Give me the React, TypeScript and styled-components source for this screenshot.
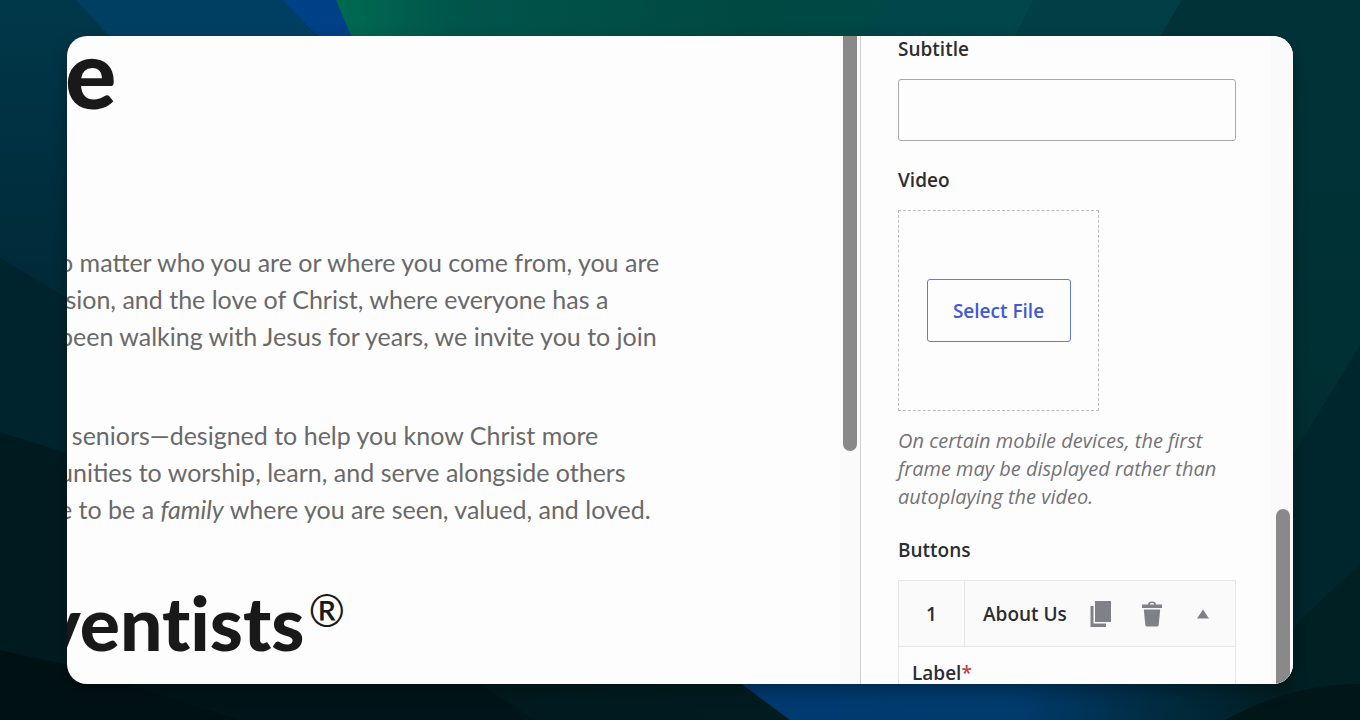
import React from "react";
import styled, { createGlobalStyle } from "styled-components";

const GlobalStyle = createGlobalStyle`
  *, *::before, *::after { box-sizing: border-box; }
  body { margin: 0; background: #00262e; }
`;

const Page = styled.div`
  position: relative;
  isolation: isolate;
  height: 100vh;
  padding: 36px 67px;
  overflow: hidden;
`;

const Backdrop = styled.svg`
  position: absolute;
  inset: 0;
  z-index: -1;
  width: 100%;
  height: 100%;
`;

const Card = styled.main`
  display: flex;
  height: 100%;
  overflow: hidden;
  border-radius: 20px;
  background: #fdfdfd;
  box-shadow: 0 6px 16px rgba(0, 0, 0, 0.3);
`;

const Preview = styled.section`
  display: flex;
  flex: 1;
  min-width: 0;
  border-right: 1px solid #cfcfd0;
`;

const Article = styled.article`
  flex: 1;
  min-width: 0;
  overflow: hidden;
  font-family: Lato, sans-serif;
  white-space: nowrap;
`;

const Hero = styled.h1`
  margin: 0 0 0 -2px;
  font-size: 96px;
  line-height: 72px;
  font-weight: 900;
  color: #191919;
`;

const Body = styled.div`
  display: flex;
  flex-direction: column;
  gap: 62px;
  margin: 136px 0 0 -8px;
`;

const Paragraph = styled.p`
  margin: 0;
  font-size: 25px;
  line-height: 37px;
  color: #696969;
`;

const Line = styled.span`
  display: block;
  white-space: pre;
`;

const Heading = styled.h2`
  display: flex;
  margin: 50px 0 0 -26px;
  font-size: 75px;
  line-height: 88px;
  font-weight: 900;
  font-variant-ligatures: none;
  color: #191919;
`;

const Registered = styled.span`
  padding-left: 4px;
  font-size: 44px;
  line-height: 64px;
  font-weight: 400;
`;

const Track = styled.div<{ $end?: boolean }>`
  display: flex;
  flex-direction: column;
  justify-content: ${(p) => (p.$end ? "flex-end" : "flex-start")};
  width: ${(p) => (p.$end ? 22 : 20)}px;
  padding: 0 3px 0 ${(p) => (p.$end ? 5 : 3)}px;
  background: #fafafa;
`;

const Thumb = styled.div<{ $end?: boolean }>`
  height: ${(p) => (p.$end ? 27 : 64)}%;
  border-radius: ${(p) => (p.$end ? "7px 7px 0 0" : "0 0 7px 7px")};
  background: #898989;
`;

const Panel = styled.aside`
  display: flex;
  width: 432px;
  font-family: "Open Sans", "Noto Sans", sans-serif;
  color: #2b2d31;
`;

const Form = styled.form`
  flex: 1;
  min-width: 0;
  overflow: hidden;
  padding: 0 35px 0 37px;
`;

const Field = styled.div`
  display: flex;
  flex-direction: column;
  align-items: flex-start;
  margin-bottom: 26px;
`;

const FieldLabel = styled.label`
  margin-bottom: 17px;
  font-size: 19px;
  line-height: 26px;
  font-weight: 600;
`;

const TextInput = styled.input`
  width: 100%;
  height: 62px;
  padding: 0 14px;
  border: 1px solid #a9a9ab;
  border-radius: 3px;
  background: #fdfdfd;
  font: inherit;
`;

const DropZone = styled.div`
  display: flex;
  align-items: center;
  justify-content: center;
  width: 201px;
  height: 201px;
  border: 1px dashed #bdbdbd;
`;

const FileButton = styled.button`
  width: 144px;
  height: 63px;
  padding: 0;
  border: 1px solid #5f7bd2;
  border-radius: 3px;
  background: #fdfdfd;
  font: 600 19px/26px "Open Sans", "Noto Sans", sans-serif;
  color: #4259d0;
`;

const Help = styled.p`
  margin: 16px 0 0;
  font-size: 20px;
  line-height: 28px;
  font-style: italic;
  color: #747476;
`;

const Repeater = styled.div`
  width: 100%;
  border: 1px solid #e6e7e8;
`;

const RepeaterHead = styled.div`
  display: flex;
  align-items: center;
  height: 66px;
  border-bottom: 1px solid #e6e7e8;
  background: #fafafa;
  font-size: 19px;
  line-height: 26px;
  font-weight: 600;
`;

const Index = styled.span`
  display: flex;
  align-items: center;
  justify-content: center;
  align-self: stretch;
  width: 66px;
  border-right: 1px solid #e6e7e8;
`;

const ItemTitle = styled.span`
  flex: 1;
  padding-left: 18px;
  white-space: nowrap;
`;

const Tools = styled.div`
  display: flex;
  gap: 21px;
  padding-right: 17px;
`;

const ToolButton = styled.button`
  display: flex;
  align-items: center;
  justify-content: center;
  width: 30px;
  height: 30px;
  padding: 0;
  border: 0;
  background: none;
  color: #808186;
`;

const RepeaterBody = styled.div`
  padding: 13px;
`;

const Required = styled.span`
  color: #d13c42;
`;

function Background() {
  return (
    <Backdrop viewBox="0 0 1360 720" preserveAspectRatio="none" aria-hidden="true">
      <defs>
        <linearGradient id="base" x1="0" y1="0" x2="0" y2="1">
          <stop offset="0" stopColor="#00384a" />
          <stop offset="0.36" stopColor="#002b3a" />
          <stop offset="1" stopColor="#00161b" />
        </linearGradient>
        <linearGradient id="green" x1="0" y1="0" x2="1" y2="0">
          <stop offset="0" stopColor="#006b51" />
          <stop offset="0.16" stopColor="#00564c" />
          <stop offset="0.6" stopColor="#004842" />
          <stop offset="1" stopColor="#00494a" />
        </linearGradient>
        <linearGradient id="right" x1="0" y1="0" x2="0" y2="1">
          <stop offset="0" stopColor="#003339" />
          <stop offset="0.5" stopColor="#003033" />
          <stop offset="0.75" stopColor="#00282d" />
          <stop offset="1" stopColor="#001c1d" />
        </linearGradient>
        <linearGradient id="blue" x1="0" y1="0" x2="1" y2="0">
          <stop offset="0" stopColor="#003a72" />
          <stop offset="0.5" stopColor="#003b6c" />
          <stop offset="0.8" stopColor="#00293a" />
          <stop offset="1" stopColor="#001d20" />
        </linearGradient>
        <linearGradient id="floor" x1="0" y1="0" x2="1" y2="0">
          <stop offset="0" stopColor="#00171b" />
          <stop offset="1" stopColor="#002025" />
        </linearGradient>
      </defs>
      <rect width="1360" height="720" fill="url(#base)" />
      <path d="M76 0H282L316 36V80H150Z" fill="#003f62" />
      <path d="M282 0H336L352 36V80H360Z" fill="#004086" />
      <path d="M336 0H1034L1015 36L990 80H370Z" fill="url(#green)" />
      <path d="M886 0H1034L1016 36H858Z" fill="#00464a" />
      <path d="M1034 0H1360V720H1180V36H1016Z" fill="url(#right)" />
      <path d="M1034 0H1182L1160 36H1016Z" fill="#003f44" />
      <path d="M1360 345L1293 455V720H1360Z" fill="#00262d" />
      <path d="M1360 565Q1320 600 1293 628V720H1360Z" fill="#002024" />
      <path d="M0 258L67 298V720H0Z" fill="#00242d" />
      <path d="M0 432L67 453V720H0Z" fill="#001b20" />
      <path d="M0 684H1360V720H0Z" fill="url(#floor)" />
      <path d="M0 650L67 665L240 720H0Z" fill="#001114" />
      <path d="M130 684H480L535 720H240Z" fill="#001519" />
      <path d="M742 684H1293V720H790Z" fill="url(#blue)" />
      <path d="M1225 720Q1290 684 1360 684V720Z" fill="#001619" />
    </Backdrop>
  );
}

function CopyIcon() {
  return (
    <svg width="22" height="26" viewBox="0 0 22 26" fill="currentColor" aria-hidden="true">
      <path d="M5 0H21V21H5Z" />
      <path d="M0.500 5H3.500V22.500H16V26H0.500Z" />
    </svg>
  );
}

function TrashIcon() {
  return (
    <svg width="20" height="26" viewBox="0 0 20 26" fill="currentColor" aria-hidden="true">
      <path d="M0 3.500H6C6 1.500 7.500 0.500 10 0.500S14 1.500 14 3.500H20V7H0ZM7.700 3.500H12.300C12 2.200 11.300 2 10 2S8 2.200 7.700 3.500Z" />
      <path d="M1.800 8.500H18.200L16.700 24Q16.500 25.500 15 25.500H5Q3.500 25.500 3.300 24Z" />
    </svg>
  );
}

function CaretIcon() {
  return (
    <svg width="14" height="10" viewBox="0 0 14 10" fill="currentColor" aria-hidden="true">
      <path d="M7 0.500L13 9.500H1Z" />
    </svg>
  );
}

const welcome = [
  "o matter who you are or where you come from, you are",
  "\u00a0sion, and the love of Christ, where everyone has a",
  "been walking with Jesus for years, we invite you to join",
];

export default function App() {
  return (
    <Page>
      <GlobalStyle />
      <Background />
      <Card>
        <Preview>
          <Article>
            <Hero>e</Hero>
            <Body>
              <Paragraph>
                {welcome.map((text) => (
                  <Line key={text}>{text}</Line>
                ))}
              </Paragraph>
              <Paragraph>
                <Line>{"\u00a0\u00a0seniors—designed to help you know Christ more"}</Line>
                <Line>unities to worship, learn, and serve alongside others</Line>
                <Line>
                  e to be a <em>family</em> where you are seen, valued, and loved.
                </Line>
              </Paragraph>
            </Body>
            <Heading>
              ventists<Registered>®</Registered>
            </Heading>
          </Article>
          <Track>
            <Thumb />
          </Track>
        </Preview>
        <Panel>
          <Form>
            <Field>
              <FieldLabel htmlFor="subtitle">Subtitle</FieldLabel>
              <TextInput id="subtitle" type="text" />
            </Field>
            <Field>
              <FieldLabel htmlFor="video">Video</FieldLabel>
              <DropZone>
                <FileButton id="video" type="button">
                  Select File
                </FileButton>
              </DropZone>
              <Help>On certain mobile devices, the first frame may be displayed rather than autoplaying the video.</Help>
            </Field>
            <Field>
              <FieldLabel as="span">Buttons</FieldLabel>
              <Repeater>
                <RepeaterHead>
                  <Index>1</Index>
                  <ItemTitle>About Us</ItemTitle>
                  <Tools>
                    <ToolButton type="button" aria-label="Duplicate">
                      <CopyIcon />
                    </ToolButton>
                    <ToolButton type="button" aria-label="Delete">
                      <TrashIcon />
                    </ToolButton>
                    <ToolButton type="button" aria-label="Collapse">
                      <CaretIcon />
                    </ToolButton>
                  </Tools>
                </RepeaterHead>
                <RepeaterBody>
                  <FieldLabel htmlFor="item-label">
                    Label<Required>*</Required>
                  </FieldLabel>
                  <TextInput id="item-label" type="text" />
                </RepeaterBody>
              </Repeater>
            </Field>
          </Form>
          <Track $end>
            <Thumb $end />
          </Track>
        </Panel>
      </Card>
    </Page>
  );
}
